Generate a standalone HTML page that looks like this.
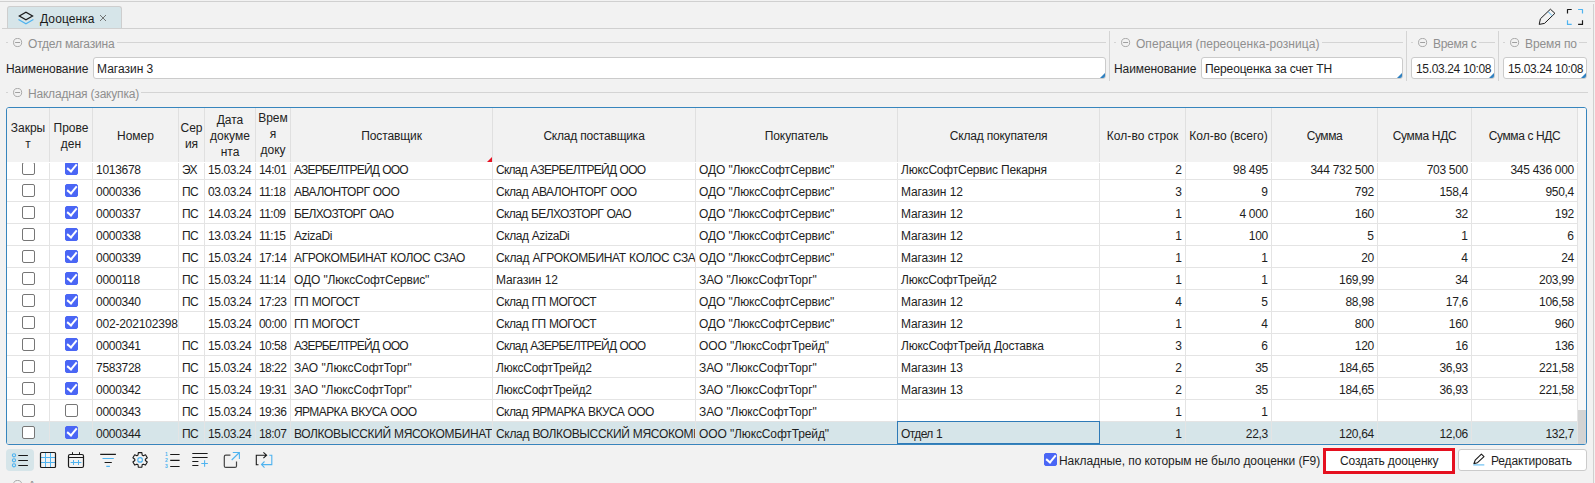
<!DOCTYPE html>
<html lang="ru"><head><meta charset="utf-8"><title>Дооценка</title>
<style>
*{box-sizing:border-box;margin:0;padding:0}
html,body{width:1595px;height:483px;overflow:hidden;background:#f2f2f2}
body{font-family:"Liberation Sans",sans-serif;font-size:12px;color:#1e1e1e;position:relative}
.abs{position:absolute}
.hl{position:absolute;height:1px;background:#d4d4d4}
.vl{position:absolute;width:1px;background:#d4d4d4}
/* tab */
#tab{position:absolute;left:7px;top:6px;width:115px;height:22px;background:#d6e5e9;border:1px solid #cecece;border-bottom:none;border-radius:3px 3px 0 0}
#tab .t{position:absolute;left:32px;top:5px;font-size:12px;line-height:14px;white-space:nowrap;color:#1a1a1a;letter-spacing:0.1px}
#tab .x{position:absolute;left:91px;top:7px}
/* fieldset legends */
.fs{position:absolute;height:14px;font-size:12px;line-height:14px;color:#8f8f8f;white-space:nowrap}
.fs .dash{position:absolute;top:6px;height:1px;background:#d4d4d4}
.fs svg{position:absolute;top:2px}
.fs .tx{position:absolute;top:1px}
.lbl{position:absolute;font-size:12px;line-height:14px;white-space:nowrap;color:#1e1e1e}
.inp{position:absolute;height:22px;background:#fff;border:1px solid #cbcbcb;border-radius:3px;font-size:12px;line-height:22px;padding-left:3px;white-space:nowrap;overflow:hidden;color:#1e1e1e}
.inp:after{content:"";position:absolute;right:0;bottom:0;border-style:solid;border-width:0 0 5px 5px;border-color:transparent transparent #2f80c0 transparent}
/* grid */
#grid{position:absolute;left:6px;top:107px;width:1581px;height:338px;border:1px solid #3785bd;border-radius:3px;background:#fff;overflow:hidden}
#hdr{position:absolute;left:0;top:0;width:1571px;height:54px;background:#f2f2f2;z-index:3}
.hc{position:absolute;top:0;height:54px;border-right:1px solid #e0e0e0;display:flex;align-items:center;justify-content:center;text-align:center;font-size:12px;line-height:16px;color:#222;overflow:hidden}
#body{position:absolute;left:0;top:55px;width:1571px;height:281px;overflow:hidden}
.row{position:absolute;left:0;width:1571px;height:22px;border-bottom:1px solid #e4e4e4;background:#fff}
.row.sel{background:#d6e5e9}
.c{position:absolute;top:0;height:21px;border-right:1px solid #e4e4e4;font-size:12px;line-height:24px;padding:0 3px;white-space:nowrap;overflow:hidden;color:#1e1e1e}
.c.r{text-align:right}
.c.cc{padding:0}
.focus{position:absolute;border:1px solid #2f7ab7;z-index:2}
.cb{position:absolute;left:50%;top:4px;margin-left:-6px;width:13px;height:13px;border:1px solid #767676;border-radius:2px;background:#fff;display:block}
.cb.on{background:#4a66f5;border-color:#4a66f5}
.cb.on:after{content:"";position:absolute;left:3px;top:-1px;width:4px;height:8px;border:solid #fff;border-width:0 2px 2px 0;transform:rotate(40deg)}
#sbar{position:absolute;left:1571px;top:0;width:8px;height:336px;background:#f7f7f7}
#sbar i{position:absolute;left:0;top:302px;width:8px;height:34px;background:#d3d3d3}
/* toolbar */
.tb{position:absolute;top:449px;width:28px;height:22px;border-radius:4px}
.tb.act{background:#d6e5e9}
.tb svg{position:absolute;left:0;top:0}
.btn{position:absolute;background:#fff;border:1px solid #cbcbcb;border-radius:3px;font-size:12px;white-space:nowrap;color:#1e1e1e}
.hc span{position:relative;top:1px}
</style></head><body>
<!-- frame lines -->
<div class="hl" style="left:0;top:1px;width:1595px;background:#d0d0d0"></div>
<div class="vl" style="left:1593px;top:4px;height:479px;background:#d0d0d0"></div>
<div class="hl" style="left:2px;top:28px;width:1589px;background:#d0d0d0"></div>

<!-- tab -->
<div id="tab">
<svg class="abs" style="left:9px;top:3px" width="18" height="16" viewBox="0 0 18 16"><path d="M2.3 6 L8.95 2.2 L15.6 6 L8.95 9.8 Z" fill="none" stroke="#1a1a1a" stroke-width="1.2" stroke-linejoin="miter"/><path d="M1.5 9.5 L8.95 13.7 L16.4 9.5" fill="none" stroke="#4fb3ef" stroke-width="1.2"/></svg>
<div class="t">Дооценка</div>
<svg class="x" width="8" height="8" viewBox="0 0 8 8"><path d="M1 1 L7 7 M7 1 L1 7" stroke="#666" stroke-width="0.9" fill="none"/></svg>
</div>

<!-- top-right icons -->
<svg class="abs" style="left:1537px;top:7px" width="20" height="20" viewBox="0 0 20 20"><path d="M2.2 17.4 L3.4 11.8 L13.4 2.2 L17.9 6.3 L7.5 16.4 Z" fill="none" stroke="#1a1a1a" stroke-width="1" stroke-linejoin="round"/><path d="M11.3 4.8 L15 8.6" stroke="#4fb3ef" stroke-width="1" fill="none"/></svg>
<svg class="abs" style="left:1565px;top:7px" width="20" height="20" viewBox="0 0 20 20"><path d="M2.5 6.6 V2.5 H6.7" fill="none" stroke="#1a1a1a" stroke-width="1.2" stroke-linejoin="round"/><path d="M13.1 2.5 H17.5 V6.6" fill="none" stroke="#4fb3ef" stroke-width="1.2" stroke-linejoin="round"/><path d="M2.5 13.2 V17.4 H6.7" fill="none" stroke="#4fb3ef" stroke-width="1.2" stroke-linejoin="round"/><path d="M13.1 17.4 H17.5 V13.2" fill="none" stroke="#1a1a1a" stroke-width="1.2" stroke-linejoin="round"/></svg>

<!-- fieldset 1: Отдел магазина -->
<div class="fs" style="left:0;top:36px;width:1106px">
 <div class="dash" style="left:6px;width:2px"></div>
 <svg style="left:13px" width="10" height="10" viewBox="0 0 10 10"><circle cx="4.6" cy="4.5" r="4.05" fill="none" stroke="#a0a0a0" stroke-width="0.9"/><path d="M2.1 4.5 H7.1" stroke="#a0a0a0" stroke-width="1"/></svg>
 <div class="tx" id="l1" style="left:28px;letter-spacing:-0.19px">Отдел магазина</div>
 <div class="dash" style="left:117px;width:989px"></div>
</div>
<div class="lbl" style="left:6px;top:62px;letter-spacing:-0.08px">Наименование</div>
<div class="inp" style="left:93px;top:57px;width:1013px">Магазин 3</div>
<div class="vl" style="left:1109px;top:31px;height:50px"></div>

<!-- fieldset 2: Операция -->
<div class="fs" style="left:1108px;top:36px;width:296px">
 <div class="dash" style="left:6px;width:2px"></div>
 <svg style="left:13px" width="10" height="10" viewBox="0 0 10 10"><circle cx="4.6" cy="4.5" r="4.05" fill="none" stroke="#a0a0a0" stroke-width="0.9"/><path d="M2.1 4.5 H7.1" stroke="#a0a0a0" stroke-width="1"/></svg>
 <div class="tx" id="l2" style="left:28px;letter-spacing:0.04px">Операция (переоценка-розница)</div>
 <div class="dash" style="left:214px;width:81px"></div>
</div>
<div class="lbl" style="left:1114px;top:62px;letter-spacing:-0.08px">Наименование</div>
<div class="inp" style="left:1201px;top:57px;width:202px;letter-spacing:-0.12px">Переоценка за счет ТН</div>
<div class="vl" style="left:1406px;top:31px;height:50px"></div>

<!-- fieldset 3: Время с -->
<div class="fs" style="left:1405px;top:36px;width:92px">
 <div class="dash" style="left:6px;width:2px"></div>
 <svg style="left:13px" width="10" height="10" viewBox="0 0 10 10"><circle cx="4.6" cy="4.5" r="4.05" fill="none" stroke="#a0a0a0" stroke-width="0.9"/><path d="M2.1 4.5 H7.1" stroke="#a0a0a0" stroke-width="1"/></svg>
 <div class="tx" id="l3" style="left:28px;letter-spacing:-0.3px">Время с</div>
 <div class="dash" style="left:74px;width:16px"></div>
</div>
<div class="inp" style="left:1411px;top:57px;width:84px;padding-left:4px;letter-spacing:-0.35px">15.03.24 10:08</div>
<div class="vl" style="left:1498px;top:31px;height:50px"></div>

<!-- fieldset 4: Время по -->
<div class="fs" style="left:1497px;top:36px;width:92px">
 <div class="dash" style="left:6px;width:2px"></div>
 <svg style="left:13px" width="10" height="10" viewBox="0 0 10 10"><circle cx="4.6" cy="4.5" r="4.05" fill="none" stroke="#a0a0a0" stroke-width="0.9"/><path d="M2.1 4.5 H7.1" stroke="#a0a0a0" stroke-width="1"/></svg>
 <div class="tx" id="l4" style="left:28px;letter-spacing:-0.09px">Время по</div>
 <div class="dash" style="left:82px;width:8px"></div>
</div>
<div class="inp" style="left:1503px;top:57px;width:84px;padding-left:4px;letter-spacing:-0.35px">15.03.24 10:08</div>

<!-- fieldset 5: Накладная (закупка) -->
<div class="fs" style="left:0;top:86px;width:1590px">
 <div class="dash" style="left:6px;width:2px"></div>
 <svg style="left:13px" width="10" height="10" viewBox="0 0 10 10"><circle cx="4.6" cy="4.5" r="4.05" fill="none" stroke="#a0a0a0" stroke-width="0.9"/><path d="M2.1 4.5 H7.1" stroke="#a0a0a0" stroke-width="1"/></svg>
 <div class="tx" id="l5" style="left:28px;letter-spacing:-0.2px">Накладная (закупка)</div>
 <div class="dash" style="left:141px;width:1447px"></div>
</div>

<!-- grid -->
<div id="grid">
 <div id="hdr">
<div class="hc" style="left:0px;width:43px"><span>Закры<br>т</span></div>
<div class="hc" style="left:43px;width:43px"><span>Прове<br>ден</span></div>
<div class="hc" style="left:86px;width:86px"><span>Номер</span></div>
<div class="hc" style="left:172px;width:26px"><span>Сер<br>ия</span></div>
<div class="hc" style="left:198px;width:51px"><span>Дата<br>докуме<br>нта</span></div>
<div class="hc" style="left:249px;width:35px"><span style="top:-1.5px">Врем<br>я<br>доку</span></div>
<div class="hc" style="left:284px;width:202px"><span style="letter-spacing:-0.10px">Поставщик</span></div>
<div class="hc" style="left:486px;width:203px"><span style="letter-spacing:-0.20px">Склад поставщика</span></div>
<div class="hc" style="left:689px;width:202px"><span style="letter-spacing:-0.10px">Покупатель</span></div>
<div class="hc" style="left:891px;width:202px"><span style="letter-spacing:-0.20px">Склад покупателя</span></div>
<div class="hc" style="left:1093px;width:86px"><span style="letter-spacing:0.07px">Кол-во строк</span></div>
<div class="hc" style="left:1179px;width:86px"><span>Кол-во (всего)</span></div>
<div class="hc" style="left:1265px;width:106px"><span style="letter-spacing:-0.40px">Сумма</span></div>
<div class="hc" style="left:1371px;width:94px"><span style="letter-spacing:-0.33px">Сумма НДС</span></div>
<div class="hc" style="left:1465px;width:106px"><span style="letter-spacing:-0.38px">Сумма с НДС</span></div>
 <svg class="abs" style="left:480px;top:49px" width="5" height="5" viewBox="0 0 5 5"><path d="M5 0 V5 H0 Z" fill="#e81123"/></svg>
 </div>
 <div id="body">
<div class="row" style="top:-5px"><div class="c cc" style="left:0px;width:43px"><i class="cb"></i></div><div class="c cc" style="left:43px;width:43px"><i class="cb on"></i></div><div class="c" style="left:86px;width:86px;letter-spacing:-0.29px">1013678</div><div class="c" style="left:172px;width:26px;letter-spacing:-0.60px">ЭХ</div><div class="c" style="left:198px;width:51px;letter-spacing:-0.42px">15.03.24</div><div class="c" style="left:249px;width:35px;letter-spacing:-0.55px">14:01</div><div class="c" style="left:284px;width:202px;letter-spacing:-0.83px;word-spacing:0.83px">АЗЕРБЕЛТРЕЙД ООО</div><div class="c" style="left:486px;width:203px;letter-spacing:-0.75px;word-spacing:0.75px">Склад АЗЕРБЕЛТРЕЙД ООО</div><div class="c" style="left:689px;width:202px;letter-spacing:-0.16px;word-spacing:0.16px">ОДО &quot;ЛюксСофтСервис&quot;</div><div class="c" style="left:891px;width:202px;letter-spacing:-0.22px;word-spacing:0.22px">ЛюксСофтСервис Пекарня</div><div class="c r" style="left:1093px;width:86px">2</div><div class="c r" style="left:1179px;width:86px;letter-spacing:-0.29px">98 495</div><div class="c r" style="left:1265px;width:106px;letter-spacing:-0.29px">344 732 500</div><div class="c r" style="left:1371px;width:94px;letter-spacing:-0.29px">703 500</div><div class="c r" style="left:1465px;width:106px;letter-spacing:-0.29px">345 436 000</div></div>
<div class="row" style="top:17px"><div class="c cc" style="left:0px;width:43px"><i class="cb"></i></div><div class="c cc" style="left:43px;width:43px"><i class="cb on"></i></div><div class="c" style="left:86px;width:86px;letter-spacing:-0.29px">0000336</div><div class="c" style="left:172px;width:26px;letter-spacing:-0.60px">ПС</div><div class="c" style="left:198px;width:51px;letter-spacing:-0.42px">03.03.24</div><div class="c" style="left:249px;width:35px;letter-spacing:-0.55px">11:18</div><div class="c" style="left:284px;width:202px;letter-spacing:-0.50px;word-spacing:0.50px">АВАЛОНТОРГ ООО</div><div class="c" style="left:486px;width:203px;letter-spacing:-0.51px;word-spacing:0.51px">Склад АВАЛОНТОРГ ООО</div><div class="c" style="left:689px;width:202px;letter-spacing:-0.16px;word-spacing:0.16px">ОДО &quot;ЛюксСофтСервис&quot;</div><div class="c" style="left:891px;width:202px;letter-spacing:-0.14px;word-spacing:0.14px">Магазин 12</div><div class="c r" style="left:1093px;width:86px">3</div><div class="c r" style="left:1179px;width:86px">9</div><div class="c r" style="left:1265px;width:106px;letter-spacing:-0.29px">792</div><div class="c r" style="left:1371px;width:94px;letter-spacing:-0.29px">158,4</div><div class="c r" style="left:1465px;width:106px;letter-spacing:-0.29px">950,4</div></div>
<div class="row" style="top:39px"><div class="c cc" style="left:0px;width:43px"><i class="cb"></i></div><div class="c cc" style="left:43px;width:43px"><i class="cb on"></i></div><div class="c" style="left:86px;width:86px;letter-spacing:-0.29px">0000337</div><div class="c" style="left:172px;width:26px;letter-spacing:-0.60px">ПС</div><div class="c" style="left:198px;width:51px;letter-spacing:-0.42px">14.03.24</div><div class="c" style="left:249px;width:35px;letter-spacing:-0.55px">11:09</div><div class="c" style="left:284px;width:202px;letter-spacing:-0.65px;word-spacing:0.65px">БЕЛХОЗТОРГ ОАО</div><div class="c" style="left:486px;width:203px;letter-spacing:-0.61px;word-spacing:0.61px">Склад БЕЛХОЗТОРГ ОАО</div><div class="c" style="left:689px;width:202px;letter-spacing:-0.16px;word-spacing:0.16px">ОДО &quot;ЛюксСофтСервис&quot;</div><div class="c" style="left:891px;width:202px;letter-spacing:-0.14px;word-spacing:0.14px">Магазин 12</div><div class="c r" style="left:1093px;width:86px">1</div><div class="c r" style="left:1179px;width:86px;letter-spacing:-0.29px">4 000</div><div class="c r" style="left:1265px;width:106px;letter-spacing:-0.29px">160</div><div class="c r" style="left:1371px;width:94px;letter-spacing:-0.29px">32</div><div class="c r" style="left:1465px;width:106px;letter-spacing:-0.29px">192</div></div>
<div class="row" style="top:61px"><div class="c cc" style="left:0px;width:43px"><i class="cb"></i></div><div class="c cc" style="left:43px;width:43px"><i class="cb on"></i></div><div class="c" style="left:86px;width:86px;letter-spacing:-0.29px">0000338</div><div class="c" style="left:172px;width:26px;letter-spacing:-0.60px">ПС</div><div class="c" style="left:198px;width:51px;letter-spacing:-0.42px">13.03.24</div><div class="c" style="left:249px;width:35px;letter-spacing:-0.55px">11:15</div><div class="c" style="left:284px;width:202px;letter-spacing:-0.38px">AzizaDi</div><div class="c" style="left:486px;width:203px;letter-spacing:-0.45px;word-spacing:0.45px">Склад AzizaDi</div><div class="c" style="left:689px;width:202px;letter-spacing:-0.16px;word-spacing:0.16px">ОДО &quot;ЛюксСофтСервис&quot;</div><div class="c" style="left:891px;width:202px;letter-spacing:-0.14px;word-spacing:0.14px">Магазин 12</div><div class="c r" style="left:1093px;width:86px">1</div><div class="c r" style="left:1179px;width:86px;letter-spacing:-0.29px">100</div><div class="c r" style="left:1265px;width:106px">5</div><div class="c r" style="left:1371px;width:94px">1</div><div class="c r" style="left:1465px;width:106px">6</div></div>
<div class="row" style="top:83px"><div class="c cc" style="left:0px;width:43px"><i class="cb"></i></div><div class="c cc" style="left:43px;width:43px"><i class="cb on"></i></div><div class="c" style="left:86px;width:86px;letter-spacing:-0.29px">0000339</div><div class="c" style="left:172px;width:26px;letter-spacing:-0.60px">ПС</div><div class="c" style="left:198px;width:51px;letter-spacing:-0.42px">15.03.24</div><div class="c" style="left:249px;width:35px;letter-spacing:-0.55px">17:14</div><div class="c" style="left:284px;width:202px;letter-spacing:-0.37px;word-spacing:0.37px">АГРОКОМБИНАТ КОЛОС СЗАО</div><div class="c" style="left:486px;width:203px;letter-spacing:-0.33px;word-spacing:0.33px">Склад АГРОКОМБИНАТ КОЛОС СЗАО</div><div class="c" style="left:689px;width:202px;letter-spacing:-0.16px;word-spacing:0.16px">ОДО &quot;ЛюксСофтСервис&quot;</div><div class="c" style="left:891px;width:202px;letter-spacing:-0.14px;word-spacing:0.14px">Магазин 12</div><div class="c r" style="left:1093px;width:86px">1</div><div class="c r" style="left:1179px;width:86px">1</div><div class="c r" style="left:1265px;width:106px;letter-spacing:-0.29px">20</div><div class="c r" style="left:1371px;width:94px">4</div><div class="c r" style="left:1465px;width:106px;letter-spacing:-0.29px">24</div></div>
<div class="row" style="top:105px"><div class="c cc" style="left:0px;width:43px"><i class="cb"></i></div><div class="c cc" style="left:43px;width:43px"><i class="cb on"></i></div><div class="c" style="left:86px;width:86px;letter-spacing:-0.29px">0000118</div><div class="c" style="left:172px;width:26px;letter-spacing:-0.60px">ПС</div><div class="c" style="left:198px;width:51px;letter-spacing:-0.42px">15.03.24</div><div class="c" style="left:249px;width:35px;letter-spacing:-0.55px">11:14</div><div class="c" style="left:284px;width:202px;letter-spacing:-0.16px;word-spacing:0.16px">ОДО &quot;ЛюксСофтСервис&quot;</div><div class="c" style="left:486px;width:203px;letter-spacing:-0.14px;word-spacing:0.14px">Магазин 12</div><div class="c" style="left:689px;width:202px;letter-spacing:-0.08px;word-spacing:0.08px">ЗАО &quot;ЛюксСофтТорг&quot;</div><div class="c" style="left:891px;width:202px;letter-spacing:-0.25px">ЛюксСофтТрейд2</div><div class="c r" style="left:1093px;width:86px">1</div><div class="c r" style="left:1179px;width:86px">1</div><div class="c r" style="left:1265px;width:106px;letter-spacing:-0.29px">169,99</div><div class="c r" style="left:1371px;width:94px;letter-spacing:-0.29px">34</div><div class="c r" style="left:1465px;width:106px;letter-spacing:-0.29px">203,99</div></div>
<div class="row" style="top:127px"><div class="c cc" style="left:0px;width:43px"><i class="cb"></i></div><div class="c cc" style="left:43px;width:43px"><i class="cb on"></i></div><div class="c" style="left:86px;width:86px;letter-spacing:-0.29px">0000340</div><div class="c" style="left:172px;width:26px;letter-spacing:-0.60px">ПС</div><div class="c" style="left:198px;width:51px;letter-spacing:-0.42px">15.03.24</div><div class="c" style="left:249px;width:35px;letter-spacing:-0.55px">17:23</div><div class="c" style="left:284px;width:202px;letter-spacing:-0.39px;word-spacing:0.39px">ГП МОГОСТ</div><div class="c" style="left:486px;width:203px;letter-spacing:-0.50px;word-spacing:0.50px">Склад ГП МОГОСТ</div><div class="c" style="left:689px;width:202px;letter-spacing:-0.16px;word-spacing:0.16px">ОДО &quot;ЛюксСофтСервис&quot;</div><div class="c" style="left:891px;width:202px;letter-spacing:-0.14px;word-spacing:0.14px">Магазин 12</div><div class="c r" style="left:1093px;width:86px">4</div><div class="c r" style="left:1179px;width:86px">5</div><div class="c r" style="left:1265px;width:106px;letter-spacing:-0.29px">88,98</div><div class="c r" style="left:1371px;width:94px;letter-spacing:-0.29px">17,6</div><div class="c r" style="left:1465px;width:106px;letter-spacing:-0.29px">106,58</div></div>
<div class="row" style="top:149px"><div class="c cc" style="left:0px;width:43px"><i class="cb"></i></div><div class="c cc" style="left:43px;width:43px"><i class="cb on"></i></div><div class="c" style="left:86px;width:86px;letter-spacing:-0.18px">002-202102398</div><div class="c" style="left:172px;width:26px"></div><div class="c" style="left:198px;width:51px;letter-spacing:-0.42px">15.03.24</div><div class="c" style="left:249px;width:35px;letter-spacing:-0.55px">00:00</div><div class="c" style="left:284px;width:202px;letter-spacing:-0.39px;word-spacing:0.39px">ГП МОГОСТ</div><div class="c" style="left:486px;width:203px;letter-spacing:-0.50px;word-spacing:0.50px">Склад ГП МОГОСТ</div><div class="c" style="left:689px;width:202px;letter-spacing:-0.16px;word-spacing:0.16px">ОДО &quot;ЛюксСофтСервис&quot;</div><div class="c" style="left:891px;width:202px;letter-spacing:-0.14px;word-spacing:0.14px">Магазин 12</div><div class="c r" style="left:1093px;width:86px">1</div><div class="c r" style="left:1179px;width:86px">4</div><div class="c r" style="left:1265px;width:106px;letter-spacing:-0.29px">800</div><div class="c r" style="left:1371px;width:94px;letter-spacing:-0.29px">160</div><div class="c r" style="left:1465px;width:106px;letter-spacing:-0.29px">960</div></div>
<div class="row" style="top:171px"><div class="c cc" style="left:0px;width:43px"><i class="cb"></i></div><div class="c cc" style="left:43px;width:43px"><i class="cb on"></i></div><div class="c" style="left:86px;width:86px;letter-spacing:-0.29px">0000341</div><div class="c" style="left:172px;width:26px;letter-spacing:-0.60px">ПС</div><div class="c" style="left:198px;width:51px;letter-spacing:-0.42px">15.03.24</div><div class="c" style="left:249px;width:35px;letter-spacing:-0.55px">10:58</div><div class="c" style="left:284px;width:202px;letter-spacing:-0.83px;word-spacing:0.83px">АЗЕРБЕЛТРЕЙД ООО</div><div class="c" style="left:486px;width:203px;letter-spacing:-0.75px;word-spacing:0.75px">Склад АЗЕРБЕЛТРЕЙД ООО</div><div class="c" style="left:689px;width:202px;letter-spacing:-0.13px;word-spacing:0.13px">ООО &quot;ЛюксСофтТрейд&quot;</div><div class="c" style="left:891px;width:202px;letter-spacing:-0.22px;word-spacing:0.22px">ЛюксСофтТрейд Доставка</div><div class="c r" style="left:1093px;width:86px">3</div><div class="c r" style="left:1179px;width:86px">6</div><div class="c r" style="left:1265px;width:106px;letter-spacing:-0.29px">120</div><div class="c r" style="left:1371px;width:94px;letter-spacing:-0.29px">16</div><div class="c r" style="left:1465px;width:106px;letter-spacing:-0.29px">136</div></div>
<div class="row" style="top:193px"><div class="c cc" style="left:0px;width:43px"><i class="cb"></i></div><div class="c cc" style="left:43px;width:43px"><i class="cb on"></i></div><div class="c" style="left:86px;width:86px;letter-spacing:-0.29px">7583728</div><div class="c" style="left:172px;width:26px;letter-spacing:-0.60px">ПС</div><div class="c" style="left:198px;width:51px;letter-spacing:-0.42px">15.03.24</div><div class="c" style="left:249px;width:35px;letter-spacing:-0.55px">18:22</div><div class="c" style="left:284px;width:202px;letter-spacing:-0.08px;word-spacing:0.08px">ЗАО &quot;ЛюксСофтТорг&quot;</div><div class="c" style="left:486px;width:203px;letter-spacing:-0.25px">ЛюксСофтТрейд2</div><div class="c" style="left:689px;width:202px;letter-spacing:-0.08px;word-spacing:0.08px">ЗАО &quot;ЛюксСофтТорг&quot;</div><div class="c" style="left:891px;width:202px;letter-spacing:-0.14px;word-spacing:0.14px">Магазин 13</div><div class="c r" style="left:1093px;width:86px">2</div><div class="c r" style="left:1179px;width:86px;letter-spacing:-0.29px">35</div><div class="c r" style="left:1265px;width:106px;letter-spacing:-0.29px">184,65</div><div class="c r" style="left:1371px;width:94px;letter-spacing:-0.29px">36,93</div><div class="c r" style="left:1465px;width:106px;letter-spacing:-0.29px">221,58</div></div>
<div class="row" style="top:215px"><div class="c cc" style="left:0px;width:43px"><i class="cb"></i></div><div class="c cc" style="left:43px;width:43px"><i class="cb on"></i></div><div class="c" style="left:86px;width:86px;letter-spacing:-0.29px">0000342</div><div class="c" style="left:172px;width:26px;letter-spacing:-0.60px">ПС</div><div class="c" style="left:198px;width:51px;letter-spacing:-0.42px">15.03.24</div><div class="c" style="left:249px;width:35px;letter-spacing:-0.55px">19:31</div><div class="c" style="left:284px;width:202px;letter-spacing:-0.08px;word-spacing:0.08px">ЗАО &quot;ЛюксСофтТорг&quot;</div><div class="c" style="left:486px;width:203px;letter-spacing:-0.25px">ЛюксСофтТрейд2</div><div class="c" style="left:689px;width:202px;letter-spacing:-0.08px;word-spacing:0.08px">ЗАО &quot;ЛюксСофтТорг&quot;</div><div class="c" style="left:891px;width:202px;letter-spacing:-0.14px;word-spacing:0.14px">Магазин 13</div><div class="c r" style="left:1093px;width:86px">2</div><div class="c r" style="left:1179px;width:86px;letter-spacing:-0.29px">35</div><div class="c r" style="left:1265px;width:106px;letter-spacing:-0.29px">184,65</div><div class="c r" style="left:1371px;width:94px;letter-spacing:-0.29px">36,93</div><div class="c r" style="left:1465px;width:106px;letter-spacing:-0.29px">221,58</div></div>
<div class="row" style="top:237px"><div class="c cc" style="left:0px;width:43px"><i class="cb"></i></div><div class="c cc" style="left:43px;width:43px"><i class="cb"></i></div><div class="c" style="left:86px;width:86px;letter-spacing:-0.29px">0000343</div><div class="c" style="left:172px;width:26px;letter-spacing:-0.60px">ПС</div><div class="c" style="left:198px;width:51px;letter-spacing:-0.42px">15.03.24</div><div class="c" style="left:249px;width:35px;letter-spacing:-0.55px">19:36</div><div class="c" style="left:284px;width:202px;letter-spacing:-0.59px;word-spacing:0.59px">ЯРМАРКА ВКУСА ООО</div><div class="c" style="left:486px;width:203px;letter-spacing:-0.58px;word-spacing:0.58px">Склад ЯРМАРКА ВКУСА ООО</div><div class="c" style="left:689px;width:202px;letter-spacing:-0.08px;word-spacing:0.08px">ЗАО &quot;ЛюксСофтТорг&quot;</div><div class="c" style="left:891px;width:202px"></div><div class="c r" style="left:1093px;width:86px">1</div><div class="c r" style="left:1179px;width:86px">1</div><div class="c r" style="left:1265px;width:106px"></div><div class="c r" style="left:1371px;width:94px"></div><div class="c r" style="left:1465px;width:106px"></div></div>
<div class="row sel" style="top:259px"><div class="c cc" style="left:0px;width:43px"><i class="cb"></i></div><div class="c cc" style="left:43px;width:43px"><i class="cb on"></i></div><div class="c" style="left:86px;width:86px;letter-spacing:-0.29px">0000344</div><div class="c" style="left:172px;width:26px;letter-spacing:-0.60px">ПС</div><div class="c" style="left:198px;width:51px;letter-spacing:-0.42px">15.03.24</div><div class="c" style="left:249px;width:35px;letter-spacing:-0.55px">18:07</div><div class="c" style="left:284px;width:202px;letter-spacing:-0.36px;word-spacing:0.36px">ВОЛКОВЫССКИЙ МЯСОКОМБИНАТ</div><div class="c" style="left:486px;width:203px;letter-spacing:-0.33px;word-spacing:0.33px">Склад ВОЛКОВЫССКИЙ МЯСОКОМБИНАТ</div><div class="c" style="left:689px;width:202px;letter-spacing:-0.13px;word-spacing:0.13px">ООО &quot;ЛюксСофтТрейд&quot;</div><div class="c" style="left:891px;width:202px;letter-spacing:-0.59px;word-spacing:0.59px">Отдел 1</div><div class="c r" style="left:1093px;width:86px">1</div><div class="c r" style="left:1179px;width:86px;letter-spacing:-0.29px">22,3</div><div class="c r" style="left:1265px;width:106px;letter-spacing:-0.29px">120,64</div><div class="c r" style="left:1371px;width:94px;letter-spacing:-0.29px">12,06</div><div class="c r" style="left:1465px;width:106px;letter-spacing:-0.29px">132,7</div></div>
<div class="focus" style="left:890px;top:258px;width:203px;height:23px"></div>
 </div>
 <div id="sbar"><i></i></div>
</div>

<!-- toolbar -->
<div class="tb act" style="left:6px"><svg width="28" height="22" viewBox="0 0 28 22"><g fill="none" stroke="#4fb3ef" stroke-width="1.1"><circle cx="8" cy="6.3" r="1.6"/><circle cx="8" cy="11.3" r="1.6"/><circle cx="8" cy="16.3" r="1.6"/></g><path d="M12.3 6.5 H21.9 M12.3 11.5 H21.9 M12.3 16.5 H21.9" stroke="#1a1a1a" stroke-width="1.1"/></svg></div>
<div class="tb" style="left:34px"><svg width="28" height="22" viewBox="0 0 28 22"><path d="M11.5 3.5 V18.5 M16.5 3.5 V18.5 M6.5 8.5 H21.5 M6.5 13.5 H21.5" stroke="#4fb3ef" stroke-width="1"/><rect x="6.5" y="3.5" width="15" height="15" rx="1" fill="none" stroke="#1a1a1a" stroke-width="1.2"/></svg></div>
<div class="tb" style="left:62px"><svg width="28" height="22" viewBox="0 0 28 22"><path d="M8.6 13.5 H19.4 M11.5 11 V16 M16.5 11 V16" stroke="#4fb3ef" stroke-width="1"/><rect x="6.5" y="5.5" width="15" height="13" rx="1.5" fill="none" stroke="#1a1a1a" stroke-width="1.2"/><path d="M6.5 8.5 H21.5 M10.5 3.2 V5.5 M17.5 3.2 V5.5" stroke="#1a1a1a" stroke-width="1"/></svg></div>
<div class="tb" style="left:94px"><svg width="28" height="22" viewBox="0 0 28 22"><path d="M6.2 5.4 H21.9 M10.6 13.5 H17.8" stroke="#1a1a1a" stroke-width="1.1"/><path d="M8.5 9.5 H19.8 M12.3 17.4 H15.9" stroke="#4fb3ef" stroke-width="1.1"/></svg></div>
<div class="tb" style="left:126px"><svg width="28" height="22" viewBox="0 0 28 22"><g transform="translate(14.1,10.9)"><path d="M-2.06 -4.88 L-1.78 -7.29 L1.78 -7.29 L2.06 -4.88 L3.20 -4.23 L5.42 -5.19 L7.20 -2.10 L5.26 -0.65 L5.26 0.65 L7.20 2.10 L5.42 5.19 L3.20 4.23 L2.06 4.88 L1.78 7.29 L-1.78 7.29 L-2.06 4.88 L-3.20 4.23 L-5.42 5.19 L-7.20 2.10 L-5.26 0.65 L-5.26 -0.65 L-7.20 -2.10 L-5.42 -5.19 L-3.20 -4.23 Z" fill="none" stroke="#1a1a1a" stroke-width="1.1" stroke-linejoin="round"/><circle cx="0" cy="0" r="2.3" fill="none" stroke="#4fb3ef" stroke-width="1.2"/></g></svg></div>
<div class="tb" style="left:158px"><svg width="28" height="22" viewBox="0 0 28 22"><path d="M12.2 5.5 H21.6 M12.2 11.4 H21.6 M12.2 17.5 H21.6" stroke="#1a1a1a" stroke-width="1.1"/><g font-family="Liberation Sans, sans-serif" font-size="5" font-weight="bold" fill="#4fb3ef"><text x="6.9" y="7.2">1</text><text x="6.9" y="13.2">2</text><text x="6.9" y="19.3">3</text></g></svg></div>
<div class="tb" style="left:186px"><svg width="28" height="22" viewBox="0 0 28 22"><path d="M6.3 4.5 H21.6 M6.3 8.5 H21.6 M6.3 12.5 H12.4 M6.3 16.5 H12.4" stroke="#1a1a1a" stroke-width="1.1"/><path d="M15.3 14.5 H21.9 M18.6 11.2 V17.8" stroke="#4fb3ef" stroke-width="1.1"/></svg></div>
<div class="tb" style="left:218px"><svg width="28" height="22" viewBox="0 0 28 22"><path d="M12.4 6.2 H7.8 Q6.3 6.2 6.3 7.7 V16.9 Q6.3 18.4 7.8 18.4 H17 Q18.5 18.4 18.5 16.9 V12.5" fill="none" stroke="#444" stroke-width="1.2"/><path d="M13.7 11 L21.4 3.5 M14.8 3.5 H21.4 V10.1" fill="none" stroke="#4fb3ef" stroke-width="1.1"/></svg></div>
<div class="tb" style="left:250px"><svg width="28" height="22" viewBox="0 0 28 22"><path d="M8.5 15.8 H6.3 V6.2 H16.6 M13.4 3.3 L16.6 6.2 L13.4 9.2" fill="none" stroke="#1a1a1a" stroke-width="1.1"/><path d="M19.3 6.2 H21.8 V15.6 H11.5 M14.5 12.5 L11.5 15.6 L14.5 18.6" fill="none" stroke="#4fb3ef" stroke-width="1.1"/></svg></div>

<!-- bottom right -->
<i class="cb on" style="left:1044px;top:453px;margin-left:0"></i>
<div class="lbl" id="cbl" style="left:1059px;top:454px;letter-spacing:-0.07px">Накладные, по которым не было дооценки (F9)</div>
<div class="abs" style="left:1323px;top:448px;width:132px;height:26px;border:3px solid #e5101f;background:#fff"></div>
<div class="lbl" id="b1" style="left:1340px;top:454px;letter-spacing:-0.14px">Создать дооценку</div>
<div class="btn" style="left:1458px;top:449px;width:129px;height:22px"></div>
<svg class="abs" style="left:1471px;top:452px" width="16" height="16" viewBox="0 0 16 16"><path d="M2.9 11.6 L4.2 8.2 L10.4 2.2 L13 4.7 L6.5 10.7 Z" fill="none" stroke="#1a1a1a" stroke-width="1.1" stroke-linejoin="round"/><path d="M2.3 12.9 H13.3" stroke="#6cc0f2" stroke-width="1.2"/></svg>
<div class="lbl" id="b2" style="left:1491px;top:454px;letter-spacing:-0.15px">Редактировать</div>

<!-- next fieldset (clipped) -->
<div class="fs" style="left:0;top:478px;width:400px">
 <svg style="left:13px" width="10" height="10" viewBox="0 0 10 10"><circle cx="4.6" cy="4.5" r="4.05" fill="none" stroke="#a0a0a0" stroke-width="0.9"/><path d="M2.1 4.5 H7.1" stroke="#a0a0a0" stroke-width="1"/></svg>
 <div class="tx" style="left:28px">Акт расценки</div>
</div>
</body></html>
